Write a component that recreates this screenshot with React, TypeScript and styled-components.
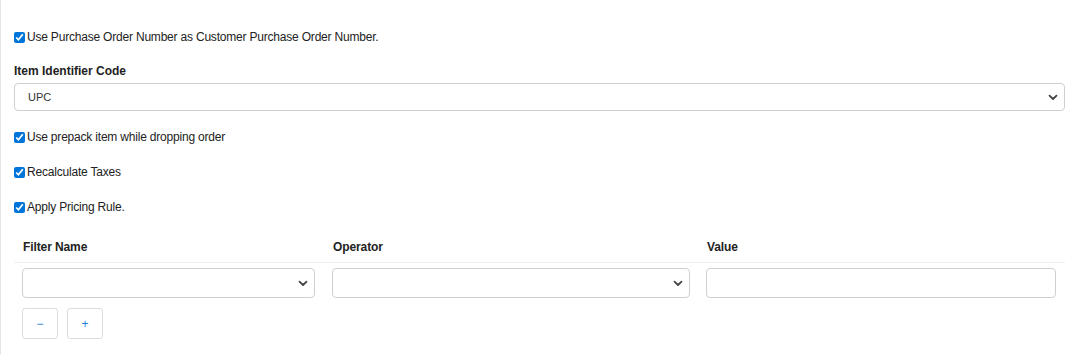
import React, { ReactElement } from 'react';
import styled, { createGlobalStyle } from 'styled-components';

const GlobalStyle = createGlobalStyle`
  body {
    margin: 0;
    background: #fff;
    font-family: "Liberation Sans", Arial, sans-serif;
    font-size: 12px;
    color: #222;
  }
`;

const Page = styled.div`
  box-sizing: border-box;
  height: 354px;
  border-left: 1px solid #e3e3e3;
  padding: 28px 15px 0 13px;
`;

const CheckRow = styled.label<{ $top: number }>`
  display: flex;
  align-items: center;
  height: 18px;
  margin-top: ${(p) => p.$top}px;
  font-size: 12px;
  letter-spacing: -0.2px;
  color: #222;
`;

const Check = styled.input`
  width: 11px;
  height: 11px;
  margin: 0 2px 0 0;
  accent-color: #0075d9;
`;

const FieldLabel = styled.div`
  margin-top: 17px;
  height: 16px;
  line-height: 16px;
  font-weight: bold;
  font-size: 12px;
`;

const SelectBox = styled.div<{ $height: number }>`
  box-sizing: border-box;
  display: flex;
  align-items: center;
  justify-content: space-between;
  height: ${(p) => p.$height}px;
  padding: 0 6px 0 13px;
  border: 1px solid #cfcfcf;
  border-radius: 4px;
  background: #fff;
  font-size: 11px;
  color: #333;
`;

const MainSelect = styled(SelectBox)`
  margin-top: 4px;
`;

const Table = styled.div`
  margin-top: 13px;
`;

const HeaderRow = styled.div`
  display: grid;
  grid-template-columns: 310px 374px 1fr;
  height: 33px;
  align-items: center;
  border-bottom: 1px solid #eeeeee;
`;

const HeaderCell = styled.div`
  padding: 2px 8px 0 9px;
  font-weight: bold;
  font-size: 12px;
  letter-spacing: -0.1px;
`;

const BodyRow = styled.div`
  display: grid;
  grid-template-columns: 310px 374px 1fr;
  padding-top: 5px;
`;

const Cell = styled.div<{ $right: number }>`
  padding: 0 ${(p) => p.$right}px 0 8px;
`;

const TextInput = styled.div`
  box-sizing: border-box;
  height: 30px;
  border: 1px solid #cfcfcf;
  border-radius: 4px;
  background: #fff;
`;

const Buttons = styled.div`
  display: flex;
  gap: 9px;
  margin-top: 10px;
  padding-left: 8px;
`;

const IconButton = styled.div`
  box-sizing: border-box;
  width: 36px;
  height: 31px;
  display: flex;
  align-items: center;
  justify-content: center;
  border: 1px solid #dcdcdc;
  border-radius: 3px;
  background: #fff;
  color: #1a7fd6;
  font-size: 12px;
`;

function Chevron(): ReactElement {
  return (
    <svg width="10" height="7" viewBox="0 0 10 7">
      <path d="M1.5 1.6 L5 5 L8.5 1.6" fill="none" stroke="#444" strokeWidth="1.8" strokeLinecap="round" strokeLinejoin="round" />
    </svg>
  );
}

const options = [
  { label: 'Use prepack item while dropping order', top: 17 },
  { label: 'Recalculate Taxes', top: 17 },
  { label: 'Apply Pricing Rule.', top: 17 },
];

export default function App(): ReactElement {
  return (
    <>
      <GlobalStyle />
      <Page>
        <CheckRow $top={0}>
          <Check type="checkbox" defaultChecked />
          Use Purchase Order Number as Customer Purchase Order Number.
        </CheckRow>

        <FieldLabel>Item Identifier Code</FieldLabel>
        <MainSelect $height={28}>
          <span>UPC</span>
          <Chevron />
        </MainSelect>

        {options.map((opt) => (
          <CheckRow key={opt.label} $top={opt.top}>
            <Check type="checkbox" defaultChecked />
            {opt.label}
          </CheckRow>
        ))}

        <Table>
          <HeaderRow>
            <HeaderCell>Filter Name</HeaderCell>
            <HeaderCell>Operator</HeaderCell>
            <HeaderCell>Value</HeaderCell>
          </HeaderRow>
          <BodyRow>
            <Cell $right={9}>
              <SelectBox $height={30}>
                <span />
                <Chevron />
              </SelectBox>
            </Cell>
            <Cell $right={8}>
              <SelectBox $height={30}>
                <span />
                <Chevron />
              </SelectBox>
            </Cell>
            <Cell $right={9}>
              <TextInput />
            </Cell>
          </BodyRow>
          <Buttons>
            <IconButton>−</IconButton>
            <IconButton>+</IconButton>
          </Buttons>
        </Table>
      </Page>
    </>
  );
}
